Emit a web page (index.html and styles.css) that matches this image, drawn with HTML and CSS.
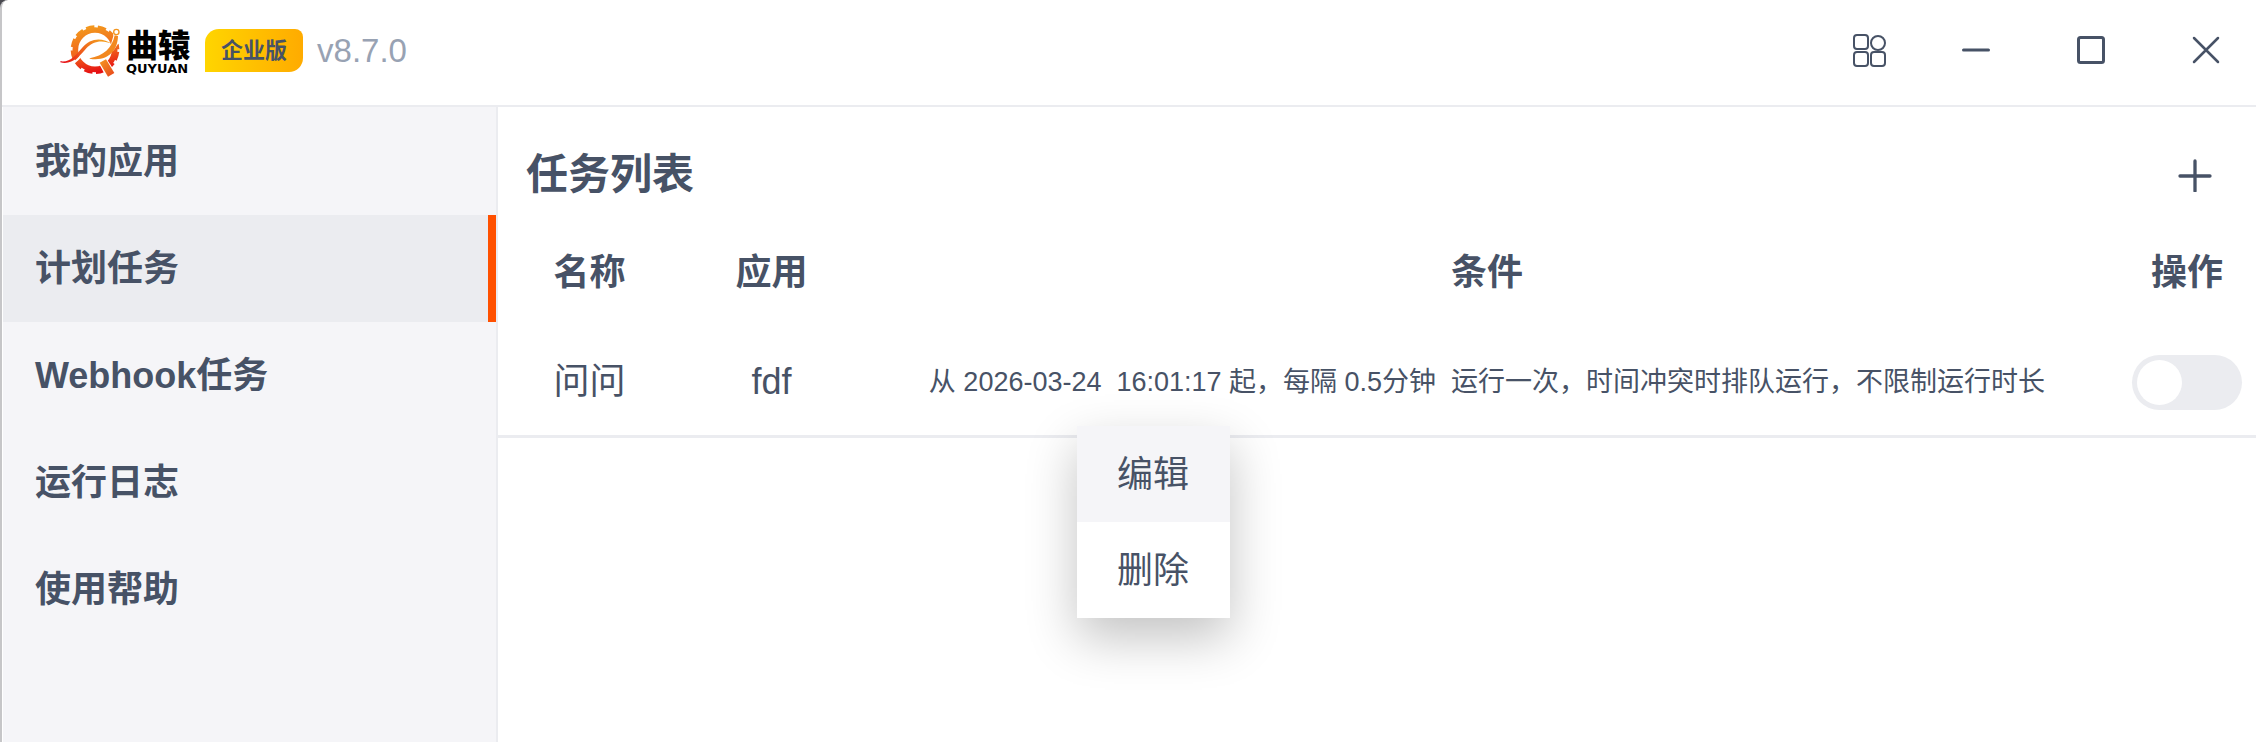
FILE: index.html
```html
<!DOCTYPE html>
<html lang="zh-CN">
<head>
<meta charset="utf-8">
<meta name="viewport" content="width=device-width, initial-scale=1">
<title>任务列表</title>
<link rel="stylesheet" href="styles.css">
</head>
<body>
<div class="window">
  <header class="titlebar">
    <div class="logo">
      <svg class="logo-mark" viewBox="180 72 180 159" aria-hidden="true">
        <defs>
          <linearGradient id="gear" gradientUnits="userSpaceOnUse" x1="270" y1="76" x2="300" y2="222">
            <stop offset="0" stop-color="#f39a1e"/><stop offset=".55" stop-color="#f0641c"/><stop offset=".95" stop-color="#e60f12"/>
          </linearGradient>
          <linearGradient id="swoosh" gradientUnits="userSpaceOnUse" x1="181" y1="188" x2="300" y2="120">
            <stop offset="0" stop-color="#e60012"/><stop offset=".5" stop-color="#ee5a1c"/><stop offset="1" stop-color="#f39a1e"/>
          </linearGradient>
          <linearGradient id="handle" gradientUnits="userSpaceOnUse" x1="302" y1="185" x2="338" y2="228">
            <stop offset="0" stop-color="#f39022"/><stop offset="1" stop-color="#e94a1b"/>
          </linearGradient>
        </defs>
        <circle cx="285" cy="149" r="59" fill="none" stroke="url(#gear)" stroke-width="17"/>
        <circle cx="285" cy="149" r="69" fill="none" stroke="url(#gear)" stroke-width="8" pathLength="120" stroke-dasharray="7 3" stroke-dashoffset="-2"/>
        <path d="M332 136L340 108L338 86L366 82L366 128L354 132L340 152Z" fill="#fff"/>
        <path d="M205 196C228 190 240 170 250 158" fill="none" stroke="#fff" stroke-width="6"/>
        <path d="M181 184C212 188 226 166 246 144C272 113 306 112 338 133C306 117 278 124 259 145C240 168 216 196 181 187Z" fill="url(#swoosh)"/>
        <path d="M269 175C310 168 337 144 344 106L354 108C353 153 323 185 269 176Z" fill="#f2881f"/>
        <circle cx="349" cy="96" r="8" fill="#fff" stroke="#f2951f" stroke-width="4"/>
        <path d="M294 185L318 174L350 222L322 238Z" fill="#fff"/>
        <path d="M299 188L318 178L343 219L324 230Z" fill="url(#handle)"/>
      </svg>
      <div class="logo-text">
        <span class="logo-name">曲辕</span>
        <span class="logo-latin">QUYUAN</span>
      </div>
    </div>
    <span class="edition">企业版</span>
    <span class="version">v8.7.0</span>
    <div class="window-actions">
      <button class="icon-button apps" type="button" aria-label="应用中心">
        <svg width="34" height="34" viewBox="0 0 34 34"><rect x="1" y="1" width="14" height="14" rx="3"/><circle cx="25" cy="9" r="7"/><rect x="1" y="18" width="14" height="14" rx="3"/><rect x="18" y="18" width="14" height="14" rx="3"/></svg>
      </button>
      <button class="icon-button" type="button" aria-label="最小化">
        <svg width="34" height="34" viewBox="0 0 34 34"><path d="M4.500 16H29.500" stroke-width="3"/></svg>
      </button>
      <button class="icon-button" type="button" aria-label="最大化">
        <svg width="34" height="34" viewBox="0 0 34 34"><rect x="4.500" y="3.500" width="25" height="25" rx="2" stroke-width="3"/></svg>
      </button>
      <button class="icon-button" type="button" aria-label="关闭">
        <svg width="34" height="34" viewBox="0 0 34 34"><path d="M5 4L29 28M29 4L5 28" stroke-width="2.500"/></svg>
      </button>
    </div>
  </header>
  <div class="body">
    <nav class="sidebar">
      <a class="nav-item" href="#apps">我的应用</a>
      <a class="nav-item active" href="#tasks" aria-current="page">计划任务</a>
      <a class="nav-item" href="#webhook">Webhook任务</a>
      <a class="nav-item" href="#logs">运行日志</a>
      <a class="nav-item" href="#help">使用帮助</a>
    </nav>
    <main class="content">
      <div class="content-head">
        <h1 class="title">任务列表</h1>
        <button class="icon-button" type="button" aria-label="新建任务">
          <svg width="34" height="34" viewBox="0 0 34 34"><path d="M2 18H32M17 3V33" stroke-width="3.300"/></svg>
        </button>
      </div>
      <table class="tasks">
        <thead>
          <tr><th class="col-name">名称</th><th class="col-app">应用</th><th class="col-condition">条件</th><th class="col-action">操作</th></tr>
        </thead>
        <tbody>
          <tr>
            <td>问问</td>
            <td>fdf</td>
            <td class="col-condition condition">从 2026-03-24&nbsp; 16:01:17 起，每隔 0.5分钟&nbsp; 运行一次，时间冲突时排队运行，不限制运行时长</td>
            <td><input class="switch" type="checkbox" role="switch" aria-label="启用任务"></td>
          </tr>
        </tbody>
      </table>
      <div class="context-menu" role="menu">
        <button class="menu-item hover" type="button" role="menuitem">编辑</button>
        <button class="menu-item" type="button" role="menuitem">删除</button>
      </div>
    </main>
  </div>
</div>
</body>
</html>
```
FILE: styles.css
```css
:root {
  --ink: #475266;
  --line: #ebecf0;
  --panel: #f5f5f8;
}

* { box-sizing: border-box; }

html { background: #4a4a50; }

body {
  margin: 0;
  color: var(--ink);
  font: 36px/48px "Liberation Sans", "Noto Sans CJK SC", sans-serif;
}

button {
  border: 0;
  color: inherit;
  font: inherit;
  cursor: pointer;
}

.window {
  display: flex;
  flex-direction: column;
  min-height: 100vh;
  border-left: 2px solid #c6c6c8;
  border-top-left-radius: 8px;
  background: #fff;
}

.titlebar {
  display: flex;
  align-items: center;
  height: 107px;
  padding: 0 0 4px 58px;
  border-bottom: 2px solid var(--line);
}

.logo {
  display: flex;
  align-items: center;
  gap: 6px;
}

.logo-mark {
  width: 60px;
  height: 53px;
}

.logo-text {
  display: flex;
  flex-direction: column;
  padding-top: 3px;
  color: #000;
  font-weight: 700;
}

.logo-name {
  font-size: 32px;
  line-height: 32px;
  font-weight: 900;
}

.logo-latin {
  font: 700 13px/13px "DejaVu Sans", sans-serif;
}

.edition {
  margin-left: 15px;
  padding: 0 16px;
  border-radius: 14px 8px 14px 0;
  background: linear-gradient(90deg, #ffd500, #ffab00);
  font-size: 22px;
  line-height: 43px;
  font-weight: 700;
}

.version {
  margin-left: 14px;
  color: #98a2b3;
  font-size: 33px;
}

.window-actions {
  display: flex;
  margin-left: auto;
  padding-right: 8px;
}

.icon-button {
  display: flex;
  align-items: center;
  justify-content: center;
  width: 85px;
  height: 60px;
  margin-left: 30px;
  padding: 0;
  background: none;
}

.icon-button svg {
  fill: none;
  stroke: var(--ink);
  stroke-width: 2;
  stroke-linecap: round;
}

.apps { margin-right: -9px; }

.body {
  display: flex;
  flex: 1;
}

.sidebar {
  flex: 0 0 496px;
  padding-top: 1px;
  border-left: 1px solid #fff;
  border-right: 2px solid var(--line);
  background: var(--panel);
}

.nav-item {
  display: flex;
  align-items: center;
  height: 107px;
  padding-left: 32px;
  color: inherit;
  font-weight: 700;
  text-decoration: none;
}

.nav-item.active {
  border-right: 8px solid #ff5000;
  background: var(--line);
}

.content {
  position: relative;
  flex: 1;
  min-width: 0;
}

.content-head {
  display: flex;
  align-items: center;
  justify-content: space-between;
  height: 112px;
  padding: 24px 19px 0 28px;
}

.title {
  margin: 0;
  font-size: 42px;
  line-height: 56px;
}

.tasks {
  width: 100%;
  border-spacing: 0;
  table-layout: fixed;
}

.tasks th,
.tasks td {
  height: 108px;
  padding: 0;
  text-align: center;
}

.tasks td {
  height: 111px;
  padding-top: 2px;
  border-bottom: 3px solid var(--line);
}

.col-name { width: 183px; }
.col-app { width: 181px; }
.col-action { width: 138px; }

.tasks .col-condition { padding-right: 6px; }
.tasks .condition { font-size: 27px; }

.switch {
  display: block;
  width: 110px;
  height: 55px;
  margin: 0 auto;
  padding: 5px;
  border-radius: 28px;
  background: var(--line);
  appearance: none;
}

.switch::before {
  content: "";
  display: block;
  width: 45px;
  height: 45px;
  border-radius: 50%;
  background: #fff;
}

.switch:checked { background: #ff5000; }
.switch:checked::before { margin-left: auto; }

.context-menu {
  position: absolute;
  top: 319px;
  left: 579px;
  display: flex;
  flex-direction: column;
  background: #fff;
  box-shadow: 0 20px 48px rgba(0, 0, 0, .24);
}

.menu-item {
  height: 96px;
  padding: 2px 41px 0 40px;
  background: none;
}

.menu-item.hover { background: var(--panel); }
```
